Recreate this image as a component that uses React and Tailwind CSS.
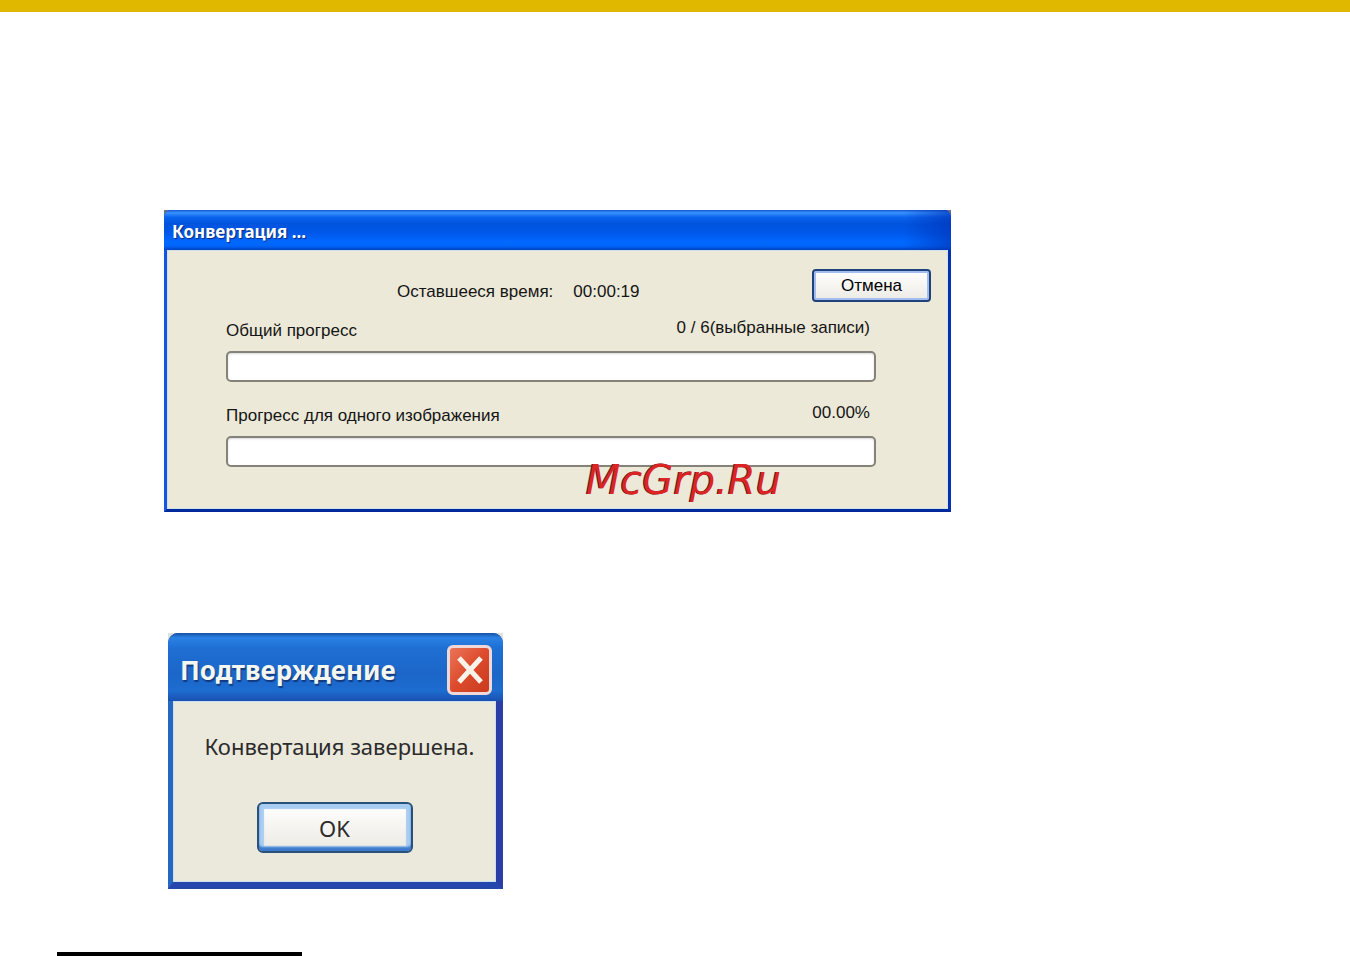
import React, { useId } from "react";

const ProgressRow = ({ label, status, value }) => {
  const id = useId();

  return (
    <div className="flex flex-col gap-[10px]">
      <div className="flex justify-between pr-1.5">
        <label htmlFor={id} className="pt-[3px]">
          {label}
        </label>
        <span>{status}</span>
      </div>
      <progress
        id={id}
        value={value}
        max={100}
        className="block h-[31px] w-full appearance-none overflow-hidden rounded-[5px] border-2 border-[#858379] bg-white shadow-[inset_0_1px_2px_#d8d8d8] [&::-webkit-progress-bar]:bg-transparent [&::-webkit-progress-value]:bg-lime-500"
      />
    </div>
  );
};

const ConvertDialog = () => {
  return (
    <section className="relative w-full max-w-[787px] bg-[#6c6f80]">
      <div className="overflow-hidden rounded-t-[7px] bg-[#0a3fd8]">
        {/* Title bar */}
        <header className="flex h-10 items-center bg-[linear-gradient(to_bottom,#1458d0_0%,#3a92ff_7%,#0a64ee_18%,#0053dd_35%,#0058ea_58%,#0068ff_78%,#0066fb_90%,#0040bb_100%)]">
          <div className="flex h-full w-full items-center bg-[linear-gradient(to_right,transparent_94%,#0034b8aa_100%)] pt-1 pl-2">
            <h2 className="font-['Noto_Sans',sans-serif] text-[17px] leading-6 font-bold text-white [text-shadow:1px_1px_1px_#0a2a80]">
              Конвертация ...
            </h2>
          </div>
        </header>
        <div className="border-r-[3px] border-b-[3px] border-l-[3px] border-r-[#0431b4] border-b-[#002a9c] border-l-[#1456e0] bg-[#ece9d8]">
          <div className="border border-[#cfe0ee] pt-[18px] pb-[41px] font-['Liberation_Sans',sans-serif] text-[17px] leading-5 text-[#151515]">
            <div className="flex justify-between pr-4">
              <p className="flex gap-5 self-end pl-[229px]">
                <span>Оставшееся время:</span>
                <span>00:00:19</span>
              </p>
              <button
                type="button"
                className="h-[33px] w-[119px] rounded-[4px] border-2 border-[#20427c] bg-linear-to-b from-white to-[#ecebe5] text-black shadow-[inset_0_0_0_2px_#a3bdf0]"
              >
                Отмена
              </button>
            </div>
            <div className="flex flex-col gap-[21px] pt-4 pr-[71px] pl-[58px]">
              <ProgressRow
                label="Общий прогресс"
                status="0 / 6(выбранные записи)"
                value={0}
              />
              <ProgressRow
                label="Прогресс для одного изображения"
                status="00.00%"
                value={0}
              />
            </div>
          </div>
        </div>
      </div>
      {/* Watermark */}
      <span className="absolute right-[170px] bottom-2.5 font-['DejaVu_Sans',sans-serif] text-[40px] leading-[44px] text-[#dc2424] italic [text-shadow:-1px_0_0_#4a2a2a]">
        McGrp.Ru
      </span>
    </section>
  );
};

const ConfirmDialog = () => {
  return (
    <section className="ml-1 w-full max-w-[335px] bg-[#dfe3da]">
      <div className="overflow-hidden rounded-t-[10px] bg-[#2b3fa8]">
        <header className="flex h-[68px] items-center justify-between bg-[linear-gradient(to_bottom,#1450a8_0%,#2a82e4_7%,#1f6fd4_22%,#1c66c8_60%,#1d6cd0_85%,#1a50b0_100%)] pt-1.5 pr-[11px] pl-3">
          <h2 className="font-['Noto_Sans',sans-serif] text-[26px] leading-9 font-bold text-[#f4f6f0] [text-shadow:1px_2px_1px_#123a80]">
            Подтверждение
          </h2>
          <button
            type="button"
            aria-label="Закрыть"
            className="flex h-[50px] w-[45px] items-center justify-center rounded-[6px] border-[3px] border-[#f0d8d8] bg-linear-to-br from-[#ea7458] via-[#dd4a2c] to-[#c83a1e]"
          >
            <svg viewBox="0 0 26 28" className="h-7 w-[26px]" fill="none">
              <path
                d="M2 2 L24 26 M24 2 L2 26"
                stroke="#f8f2ea"
                strokeWidth="5"
              />
            </svg>
          </button>
        </header>
        <div className="border-r-[7px] border-b-[7px] border-l-[5px] border-r-[#2a3fa6] border-b-[#2546ac] border-l-[#2468c0] bg-[#ebe8dc]">
          <div className="flex flex-col items-center gap-10 border border-[#c8e0f0] pt-7 pb-7 font-['Noto_Sans',sans-serif] text-[22px] leading-8 text-[#2b2b2b]">
            <p className="pl-2.5">Конвертация завершена.</p>
            <button
              type="button"
              className="h-[51px] w-[156px] rounded-[6px] border-2 border-[#28517c] bg-linear-to-b from-white to-[#ebe9e2] shadow-[inset_0_-4px_2px_#3d7acb,inset_0_0_1px_5px_#a8cdf2]"
            >
              OK
            </button>
          </div>
        </div>
      </div>
    </section>
  );
};

const App = () => {
  return (
    <div className="min-h-screen bg-white">
      <div className="h-3 bg-[#e0b800]" />
      <main className="flex flex-col gap-[121px] pt-[198px] pr-4 pb-[63px] pl-[164px]">
        <ConvertDialog />
        <ConfirmDialog />
      </main>
      {/* Footnote rule */}
      <div className="ml-[57px] h-1 w-[245px] bg-black" />
    </div>
  );
};

export default App;
